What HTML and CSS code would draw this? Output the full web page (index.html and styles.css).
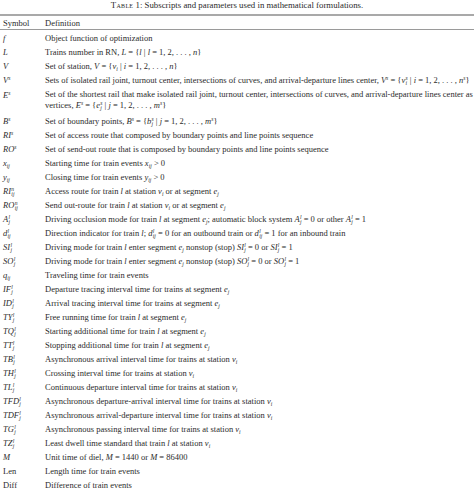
FILE: index.html
```html
<!DOCTYPE html>
<html>
<head>
<meta charset="utf-8">
<link rel="stylesheet" href="styles.css">
</head>
<body>
<div class="caption"><span class="sc">Table</span> 1: Subscripts and parameters used in mathematical formulations.</div>
<div class="tbl">
  <div class="row head"><div class="sym">Symbol</div><div class="def">Definition</div></div>
  <div class="row"><div class="sym"><i>f</i></div><div class="def">Object function of optimization</div></div>
  <div class="row"><div class="sym"><i>L</i></div><div class="def">Trains number in RN, <i>L</i> = {<i>l</i> | <i>l</i> = 1, 2, . . . , <i>n</i>}</div></div>
  <div class="row"><div class="sym"><i>V</i></div><div class="def">Set of station, <i>V</i> = {<i>v</i><sub>i</sub> | <i>i</i> = 1, 2, . . . , <i>n</i>}</div></div>
  <div class="row"><div class="sym"><i>V</i><sup>s</sup></div><div class="def">Sets of isolated rail joint, turnout center, intersections of curves, and arrival-departure lines center, <i>V</i><sup>s</sup> = {<i>v</i><span class="ss"><span>s</span><span>i</span></span> | <i>i</i> = 1, 2, . . . , <i>n</i><sup>s</sup>}</div></div>
  <div class="row two"><div class="sym"><i>E</i><sup>s</sup></div><div class="def">Set of the shortest rail that make isolated rail joint, turnout center, intersections of curves, and arrival-departure lines center as vertices, <i>E</i><sup>s</sup> = {<i>e</i><span class="ss"><span>s</span><span>j</span></span> | <i>j</i> = 1, 2, . . . , <i>m</i><sup>s</sup>}</div></div>
  <div class="row"><div class="sym"><i>B</i><sup>s</sup></div><div class="def">Set of boundary points, <i>B</i><sup>s</sup> = {<i>b</i><span class="ss"><span>s</span><span>j</span></span> | <i>j</i> = 1, 2, . . . , <i>m</i><sup>s</sup>}</div></div>
  <div class="row"><div class="sym"><i>RI</i><sup>s</sup></div><div class="def">Set of access route that composed by boundary points and line points sequence</div></div>
  <div class="row"><div class="sym"><i>RO</i><sup>s</sup></div><div class="def">Set of send-out route that is composed by boundary points and line points sequence</div></div>
  <div class="row"><div class="sym"><i>x</i><sub>ij</sub></div><div class="def">Starting time for train events <i>x</i><sub>ij</sub> &gt; 0</div></div>
  <div class="row"><div class="sym"><i>y</i><sub>ij</sub></div><div class="def">Closing time for train events <i>y</i><sub>ij</sub> &gt; 0</div></div>
  <div class="row"><div class="sym"><i>RI</i><span class="ss"><span>n</span><span>ij</span></span></div><div class="def">Access route for train <i>l</i> at station <i>v</i><sub>i</sub> or at segment <i>e</i><sub>j</sub></div></div>
  <div class="row"><div class="sym"><i>RO</i><span class="ss"><span>n</span><span>ij</span></span></div><div class="def">Send out-route for train <i>l</i> at station <i>v</i><sub>i</sub> or at segment <i>e</i><sub>j</sub></div></div>
  <div class="row"><div class="sym"><i>A</i><span class="ss"><span>l</span><span>j</span></span></div><div class="def">Driving occlusion mode for train <i>l</i> at segment <i>e</i><sub>j</sub>; automatic block system <i>A</i><span class="ss"><span>l</span><span>j</span></span> = 0 or other <i>A</i><span class="ss"><span>l</span><span>j</span></span> = 1</div></div>
  <div class="row"><div class="sym"><i>d</i><span class="ss"><span>l</span><span>ij</span></span></div><div class="def">Direction indicator for train <i>l</i>; <i>d</i><span class="ss"><span>l</span><span>ij</span></span> = 0 for an outbound train or <i>d</i><span class="ss"><span>l</span><span>ij</span></span> = 1 for an inbound train</div></div>
  <div class="row"><div class="sym"><i>SI</i><span class="ss"><span>l</span><span>j</span></span></div><div class="def">Driving mode for train <i>l</i> enter segment <i>e</i><sub>j</sub> nonstop (stop) <i>SI</i><span class="ss"><span>l</span><span>j</span></span> = 0 or <i>SI</i><span class="ss"><span>l</span><span>j</span></span> = 1</div></div>
  <div class="row"><div class="sym"><i>SO</i><span class="ss"><span>l</span><span>j</span></span></div><div class="def">Driving mode for train <i>l</i> enter segment <i>e</i><sub>j</sub> nonstop (stop) <i>SO</i><span class="ss"><span>l</span><span>j</span></span> = 0 or <i>SO</i><span class="ss"><span>l</span><span>j</span></span> = 1</div></div>
  <div class="row"><div class="sym"><i>q</i><sub>ij</sub></div><div class="def">Traveling time for train events</div></div>
  <div class="row"><div class="sym"><i>IF</i><span class="ss"><span>l</span><span>j</span></span></div><div class="def">Departure tracing interval time for trains at segment <i>e</i><sub>j</sub></div></div>
  <div class="row"><div class="sym"><i>ID</i><span class="ss"><span>l</span><span>j</span></span></div><div class="def">Arrival tracing interval time for trains at segment <i>e</i><sub>j</sub></div></div>
  <div class="row"><div class="sym"><i>TY</i><span class="ss"><span>l</span><span>j</span></span></div><div class="def">Free running time for train <i>l</i> at segment <i>e</i><sub>j</sub></div></div>
  <div class="row"><div class="sym"><i>TQ</i><span class="ss"><span>l</span><span>j</span></span></div><div class="def">Starting additional time for train <i>l</i> at segment <i>e</i><sub>j</sub></div></div>
  <div class="row"><div class="sym"><i>TT</i><span class="ss"><span>l</span><span>j</span></span></div><div class="def">Stopping additional time for train <i>l</i> at segment <i>e</i><sub>j</sub></div></div>
  <div class="row"><div class="sym"><i>TB</i><span class="ss"><span>l</span><span>j</span></span></div><div class="def">Asynchronous arrival interval time for trains at station <i>v</i><sub>i</sub></div></div>
  <div class="row"><div class="sym"><i>TH</i><span class="ss"><span>l</span><span>j</span></span></div><div class="def">Crossing interval time for trains at station <i>v</i><sub>i</sub></div></div>
  <div class="row"><div class="sym"><i>TL</i><span class="ss"><span>l</span><span>j</span></span></div><div class="def">Continuous departure interval time for trains at station <i>v</i><sub>i</sub></div></div>
  <div class="row"><div class="sym"><i>TFD</i><span class="ss"><span>l</span><span>j</span></span></div><div class="def">Asynchronous departure-arrival interval time for trains at station <i>v</i><sub>i</sub></div></div>
  <div class="row"><div class="sym"><i>TDF</i><span class="ss"><span>l</span><span>j</span></span></div><div class="def">Asynchronous arrival-departure interval time for trains at station <i>v</i><sub>i</sub></div></div>
  <div class="row"><div class="sym"><i>TG</i><span class="ss"><span>l</span><span>j</span></span></div><div class="def">Asynchronous passing interval time for trains at station <i>v</i><sub>i</sub></div></div>
  <div class="row"><div class="sym"><i>TZ</i><span class="ss"><span>l</span><span>j</span></span></div><div class="def">Least dwell time standard that train <i>l</i> at station <i>v</i><sub>i</sub></div></div>
  <div class="row"><div class="sym"><i>M</i></div><div class="def">Unit time of diel, <i>M</i> = 1440 or <i>M</i> = 86400</div></div>
  <div class="row"><div class="sym">Len</div><div class="def">Length time for train events</div></div>
  <div class="row"><div class="sym">Diff</div><div class="def">Difference of train events</div></div>
</div>
</body>
</html>
```
FILE: styles.css
```css
html, body {
  margin: 0;
  padding: 0;
  background: #ffffff;
}
body {
  font-family: "Liberation Serif", "Times New Roman", serif;
  color: #2b2b2b;
  font-size: 8.5px;
  width: 474px;
  overflow: hidden;
}
.caption {
  text-align: center;
  font-size: 8.8px;
  line-height: 10px;
  height: 14px;
}
.sc {
  font-variant: small-caps;
  letter-spacing: 0.3px;
}
.tbl {
  border-top: 2px solid #a9a9a9;
}
.row {
  display: grid;
  grid-template-columns: 45px 1fr;
  line-height: 14px;
  height: 14px;
}
.head {
  height: 13px;
  line-height: 14px;
  border-bottom: 1px solid #9a9a9a;
  margin-bottom: 1px;
}
.sym {
  padding-left: 3px;
  white-space: nowrap;
}
.def {
  white-space: nowrap;
}
.row.two {
  height: 27px;
}
.two .def {
  white-space: normal;
  line-height: 11px;
  padding-top: 2px;
}
.two .sym {
  padding-top: 1px;
}
i {
  font-style: italic;
}
sub, sup {
  font-size: 5.6px;
  line-height: 0;
  font-style: italic;
}
sub {
  vertical-align: -1.5px;
}
sup {
  vertical-align: 3.2px;
}
.ss {
  display: inline-grid;
  vertical-align: middle;
  font-size: 5.6px;
  line-height: 4.8px;
  font-style: italic;
  margin-left: 0.3px;
}
```
